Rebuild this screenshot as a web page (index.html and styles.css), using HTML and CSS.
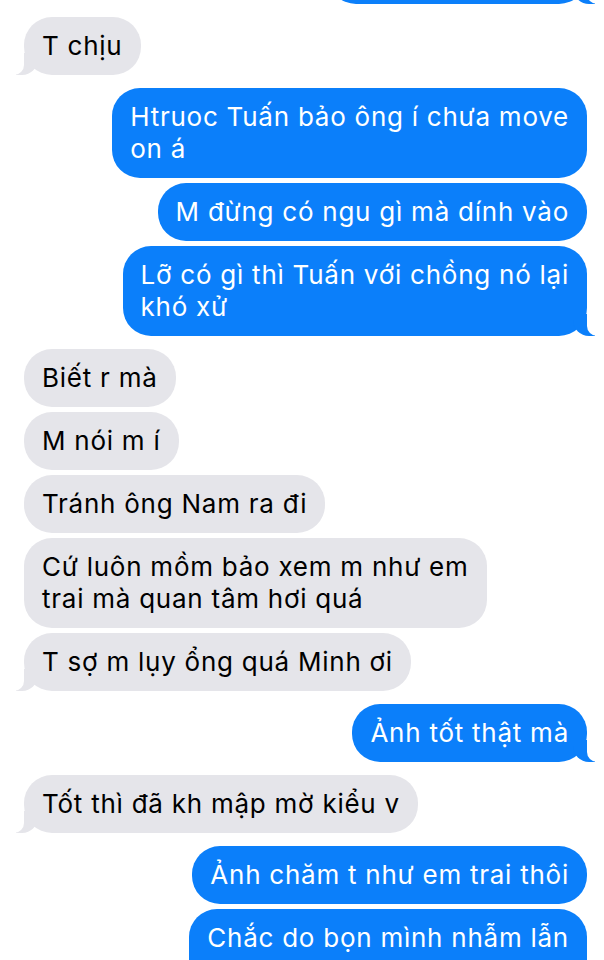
FILE: index.html
```html
<!DOCTYPE html>
<html lang="vi">
<head>
<meta charset="utf-8">
<title>Tin nhắn</title>
<link rel="stylesheet" href="styles.css">
</head>
<body>
<main class="chat">
  <div class="group out">
    <div class="bubble out tail cut"></div>
  </div>
  <div class="group in">
    <div class="bubble in tail">T chịu</div>
  </div>
  <div class="group out">
    <div class="bubble out">Htruoc Tuấn bảo ông í chưa move<br>on á</div>
    <div class="bubble out">M đừng có ngu gì mà dính vào</div>
    <div class="bubble out tail">Lỡ có gì thì Tuấn với chồng nó lại<br>khó xử</div>
  </div>
  <div class="group in">
    <div class="bubble in">Biết r mà</div>
    <div class="bubble in">M nói m í</div>
    <div class="bubble in">Tránh ông Nam ra đi</div>
    <div class="bubble in">Cứ luôn mồm bảo xem m như em<br>trai mà quan tâm hơi quá</div>
    <div class="bubble in tail">T sợ m lụy ổng quá Minh ơi</div>
  </div>
  <div class="group out">
    <div class="bubble out tail">Ảnh tốt thật mà</div>
  </div>
  <div class="group in">
    <div class="bubble in tail">Tốt thì đã kh mập mờ kiểu v</div>
  </div>
  <div class="group out">
    <div class="bubble out">Ảnh chăm t như em trai thôi</div>
    <div class="bubble out last">Chắc do bọn mình nhẫm lẫn</div>
  </div>
</main>
</body>
</html>
```
FILE: styles.css
```css
html, body {
  margin: 0;
  padding: 0;
  background: #ffffff;
}

body {
  width: 604px;
  height: 960px;
  overflow: hidden;
  font-family: "Inter", "Noto Sans", "Liberation Sans", sans-serif;
}

.chat {
  display: flex;
  flex-direction: column;
  gap: 13px;
  padding: 0 17px 0 24px;
  margin-top: -54px;
}

.group {
  display: flex;
  flex-direction: column;
  gap: 5px;
}

.group.in {
  align-items: flex-start;
}

.group.out {
  align-items: flex-end;
}

.bubble {
  position: relative;
  box-sizing: border-box;
  padding: 13px 18px;
  border-radius: 28px;
  font-size: 26px;
  letter-spacing: 0.75px;
  line-height: 32px;
  white-space: nowrap;
}

.bubble.in {
  background: #e5e5ea;
  color: #000000;
}

.bubble.out {
  background: #0b7ffa;
  color: #ffffff;
}

.bubble.cut {
  width: 259px;
  height: 58px;
}

.bubble.last {
  padding-bottom: 40px;
}

/* tails */
.bubble.tail::before,
.bubble.tail::after {
  content: "";
  position: absolute;
  bottom: 0;
  height: 22px;
}

.bubble.in.tail::before {
  left: -8px;
  width: 22px;
  background: #e5e5ea;
  border-bottom-right-radius: 16px;
}

.bubble.in.tail::after {
  left: -11px;
  width: 11px;
  background: #ffffff;
  border-bottom-right-radius: 10px;
}

.bubble.out.tail::before {
  right: -8px;
  width: 22px;
  background: #0b7ffa;
  border-bottom-left-radius: 16px;
}

.bubble.out.tail::after {
  right: -11px;
  width: 11px;
  background: #ffffff;
  border-bottom-left-radius: 10px;
}
```
